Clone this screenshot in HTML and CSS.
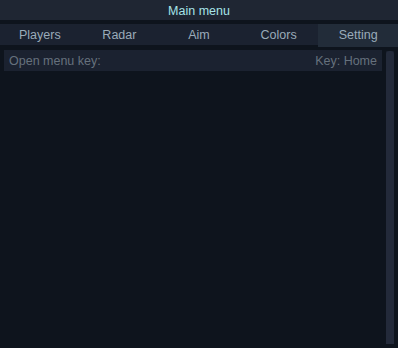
FILE: index.html
```html
<!DOCTYPE html>
<html>
<head>
<meta charset="utf-8">
<link rel="stylesheet" href="styles.css">
</head>
<body>
<div class="window">
  <div class="title">Main menu</div>
  <div class="tabs">
    <div class="tab">Players</div>
    <div class="tab">Radar</div>
    <div class="tab">Aim</div>
    <div class="tab">Colors</div>
    <div class="tab active">Setting</div>
  </div>
  <div class="content">
    <div class="list">
      <div class="row"><span>Open menu key:</span><span>Key: Home</span></div>
    </div>
    <div class="scrollbar"><div class="thumb"></div></div>
  </div>
</div>
</body>
</html>
```
FILE: styles.css
```css
html, body {
  margin: 0;
  padding: 0;
  background: #0e141d;
  width: 398px;
  height: 348px;
  overflow: hidden;
}
.window {
  width: 398px;
  height: 348px;
  display: flex;
  flex-direction: column;
  font-family: "Liberation Sans", Arial, sans-serif;
  font-size: 12.5px;
  background: #0e141d;
}
.title {
  height: 20px;
  line-height: 23px;
  text-align: center;
  background: #1f2633;
  color: #a6e4e8;
}
.tabs {
  margin-top: 4px;
  height: 21px;
  display: grid;
  grid-template-columns: repeat(5, 1fr);
  background: #1b2230;
}
.tab {
  text-align: center;
  line-height: 23px;
  color: #9aabb9;
}
.tab.active {
  background: #222c39;
}
.content {
  flex: 1;
  display: flex;
  padding: 5px 4px 4px 4px;
  gap: 4px;
}
.list {
  flex: 1;
}
.row {
  height: 21px;
  line-height: 23px;
  display: flex;
  justify-content: space-between;
  padding: 0 5px;
  background: #1b2230;
  color: #66717d;
}
.scrollbar {
  width: 8px;
  margin-top: 1px;
  background: #151b27;
  display: flex;
}
.thumb {
  flex: 1;
  background: #232a3a;
  border-radius: 3px 3px 0 0;
}
```
